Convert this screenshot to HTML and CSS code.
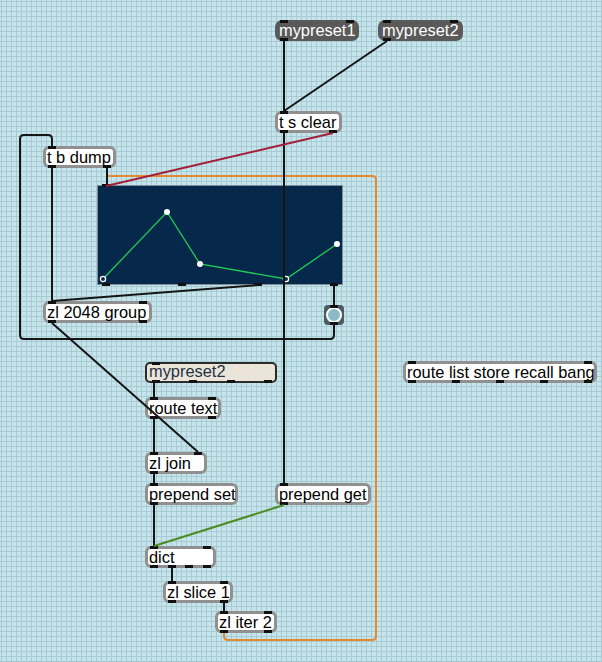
FILE: index.html
```html
<!DOCTYPE html>
<html>
<head>
<meta charset="utf-8">
<link rel="stylesheet" href="styles.css">
</head>
<body>
<div class="patch">

  <div class="msg m-p1">mypreset1<span class="ports top nb"><i></i><i></i></span><span class="ports bot nb"><i></i></span></div>
  <div class="msg m-p2">mypreset2<span class="ports top nb"><i></i><i></i></span><span class="ports bot nb"><i></i></span></div>

  <div class="obj o-tsclear">t s clear<span class="ports top"><i></i></span><span class="ports bot"><i></i><i></i></span></div>
  <div class="obj o-tbdump">t b dump<span class="ports top"><i></i></span><span class="ports bot"><i></i><i></i></span></div>

  <div class="func">
    <svg class="func-svg" viewBox="0 0 244 98" width="244" height="98">
      <polyline points="5,93 69,26 102,78 188,93 239,58" fill="none" stroke="#20cc55" stroke-width="1.3"/>
      <circle cx="5" cy="93" r="2.6" fill="#06284a" stroke="#fff" stroke-width="1.3"/>
      <circle cx="69" cy="26" r="3" fill="#fff"/>
      <circle cx="102" cy="78" r="3" fill="#fff"/>
      <circle cx="188" cy="93" r="2.6" fill="#06284a" stroke="#fff" stroke-width="1.3"/>
      <circle cx="239" cy="58" r="3" fill="#fff"/>
    </svg>
    <span class="ports top fp"><i></i></span>
    <span class="ports bot fp"><i></i><i></i><i></i><i></i></span>
  </div>

  <div class="bang"><span class="ring"></span><span class="ports top c"><i></i></span><span class="ports bot c"><i></i></span></div>

  <div class="obj o-zlgroup">zl 2048 group<span class="ports top"><i></i><i></i></span><span class="ports bot"><i></i><i></i></span></div>

  <div class="menu">mypreset2<span class="ports top mp"><i></i></span><span class="ports bot mp"><i></i><i></i><i></i><i></i></span></div>

  <div class="obj o-routetext">route text<span class="ports top"><i></i><i></i></span><span class="ports bot"><i></i><i></i></span></div>
  <div class="obj o-zljoin">zl join<span class="ports top"><i></i><i></i></span><span class="ports bot"><i></i></span></div>
  <div class="obj o-pset">prepend set<span class="ports top"><i></i></span><span class="ports bot"><i></i></span></div>
  <div class="obj o-pget">prepend get<span class="ports top"><i></i></span><span class="ports bot"><i></i></span></div>
  <div class="obj o-dict">dict<span class="ports top"><i></i><i></i></span><span class="ports bot"><i></i><i></i><i></i><i></i></span></div>
  <div class="obj o-slice">zl slice 1<span class="ports top"><i></i><i></i></span><span class="ports bot"><i></i><i></i></span></div>
  <div class="obj o-iter">zl iter 2<span class="ports top"><i></i><i></i></span><span class="ports bot"><i></i><i></i></span></div>

  <div class="obj o-route">route list store recall bang<span class="ports top"><i></i><i></i></span><span class="ports bot"><i></i><i></i><i></i><i></i><i></i></span></div>

  <svg class="cords" width="602" height="662" viewBox="0 0 602 662">
    <path class="orange" d="M224 633 V636 Q224 640 228 640 H372 Q376 640 376 636 V180 Q376 176 372 176 H107 V185"/>
    <path class="black" d="M284 41 V111"/>
    <path class="black" d="M387 41 L284 111"/>
    <path class="black" d="M284 133 V483"/>
    <path class="black" d="M52 168 V301"/>
    <path class="black" d="M107 168 V186"/>
    <path class="black" d="M258 285 L52 301"/>
    <path class="black" d="M334 285 V305"/>
    <path class="black" d="M334 325 V335 Q334 339 330 339 H24 Q20 339 20 335 V139 Q20 135 24 135 H48 Q52 135 52 139 V146"/>
    <path class="black" d="M52 323 L198 452"/>
    <path class="black" d="M154 383 V397"/>
    <path class="black" d="M154 419 V452"/>
    <path class="black" d="M154 474 V483"/>
    <path class="black" d="M154 505 V546"/>
    <path class="black" d="M172 568 V581"/>
    <path class="black" d="M224 603 V611"/>
    <path class="red" d="M333 133 L106 186"/>
    <path class="green" d="M284 505 L154 546"/>
  </svg>
</div>
</body>
</html>
```

FILE: styles.css
```css
html, body {
  margin: 0;
  padding: 0;
}

body {
  background: #c6e4eb;
}

.patch {
  position: relative;
  width: 602px;
  height: 662px;
  overflow: hidden;
  background-color: #c6e4eb;
  background-image:
    linear-gradient(to right, #a8cad3 1px, transparent 1px),
    linear-gradient(to bottom, #a8cad3 1px, transparent 1px);
  background-size: 5px 5px;
  background-position: 1px 1px;
  font-family: "Liberation Sans", Arial, sans-serif;
  font-size: 16.4px;
}

/* object boxes */
.obj {
  position: absolute;
  box-sizing: border-box;
  height: 22px;
  border: 3px solid #909090;
  border-radius: 6px;
  background: #fff;
  color: #000;
  line-height: 16px;
  padding-left: 1px;
  white-space: nowrap;
}

.o-tsclear { left: 275px; top: 111px; width: 67px; }
.o-tbdump { left: 43px; top: 146px; width: 73px; }
.o-zlgroup { left: 43px; top: 301px; width: 109px; }
.o-routetext { left: 145px; top: 397px; width: 76px; }
.o-zljoin { left: 145px; top: 452px; width: 62px; }
.o-pset { left: 145px; top: 483px; width: 93px; }
.o-pget { left: 275px; top: 483px; width: 96px; }
.o-dict { left: 145px; top: 546px; width: 71px; }
.o-slice { left: 163px; top: 581px; width: 70px; }
.o-iter { left: 215px; top: 611px; width: 62px; }
.o-route { left: 403px; top: 361px; width: 194px; }

/* inlets / outlets */
.ports {
  position: absolute;
  left: 2px;
  right: 2px;
  height: 3px;
  display: flex;
  justify-content: space-between;
}
.ports.top { top: -3px; }
.ports.bot { bottom: -3px; }
.ports i {
  display: block;
  width: 8px;
  height: 3px;
  background: #111;
}
.ports.nb { left: 5px; right: 5px; }
.ports.nb.top { top: 0; }
.ports.nb.bot { bottom: 0; }

/* dark message boxes */
.msg {
  position: absolute;
  box-sizing: border-box;
  height: 21px;
  top: 20px;
  border-radius: 7px;
  background: #5a5a5a;
  color: #fff;
  line-height: 21px;
  padding-left: 4px;
  white-space: nowrap;
}
.m-p1 { left: 275px; width: 84px; }
.m-p2 { left: 378px; width: 85px; }

/* light menu box */
.menu {
  position: absolute;
  box-sizing: border-box;
  left: 145px;
  top: 362px;
  width: 132px;
  height: 21px;
  border: 2px solid #2c2c2c;
  border-radius: 5px;
  background: #ebe4d9;
  color: #223344;
  line-height: 15px;
  padding-left: 2px;
  white-space: nowrap;
}
.ports.mp { left: 5px; right: 3px; }
.ports.mp.top { top: -2px; }
.ports.mp.bot { bottom: -2px; }

/* function graph */
.func {
  position: absolute;
  left: 97px;
  top: 185px;
  width: 246px;
  height: 100px;
  box-sizing: border-box;
  border: 1px solid #7d8c97;
  background: #06284a;
}
.func-svg {
  display: block;
}
.ports.fp { left: 4px; right: 4px; }
.ports.fp.top { top: -2px; }
.ports.fp.bot { bottom: -2px; }

/* bang */
.bang {
  position: absolute;
  left: 324px;
  top: 305px;
  width: 20px;
  height: 20px;
  border-radius: 4px;
  background: #4f5b63;
  display: flex;
  align-items: center;
  justify-content: center;
}
.ring {
  display: block;
  width: 12px;
  height: 12px;
  border: 2px solid #fff;
  border-radius: 50%;
  background: #8bbac8;
}
.ports.c { left: 0; right: 0; justify-content: center; }
.ports.c.top { top: 0; }
.ports.c.bot { bottom: 0; }

/* patch cords */
.cords {
  position: absolute;
  left: 0;
  top: 0;
  pointer-events: none;
}
.cords path {
  fill: none;
  stroke-width: 2;
  stroke-linecap: butt;
}
.cords .black { stroke: #151515; }
.cords .red { stroke: #a31f38; }
.cords .green { stroke: #4b8d1f; }
.cords .orange { stroke: #e38a31; }
```
